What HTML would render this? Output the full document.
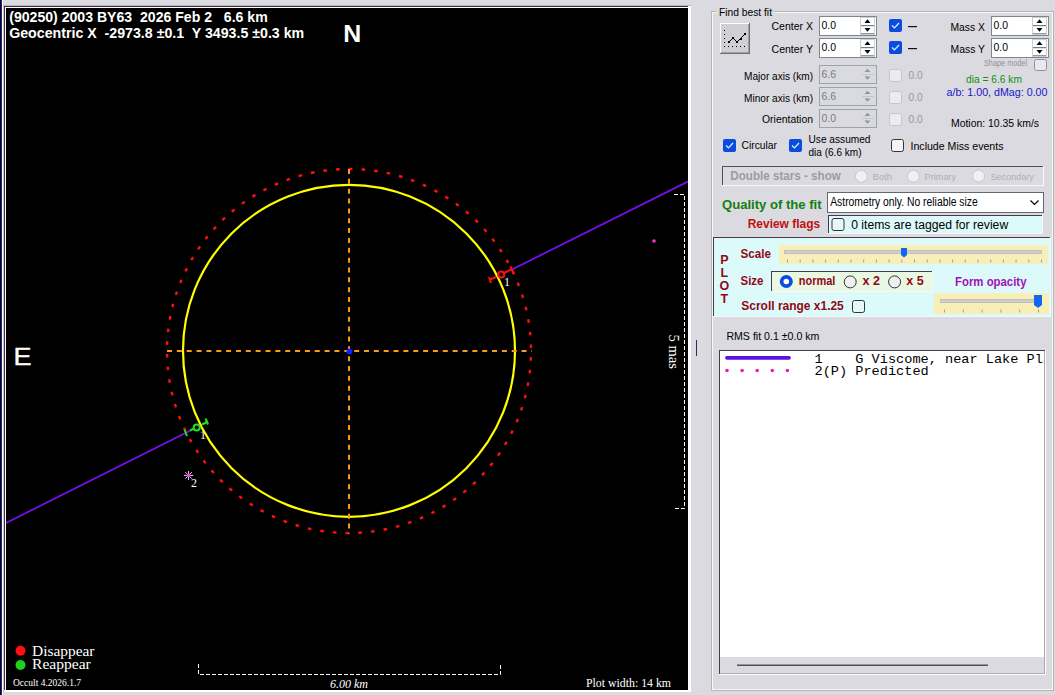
<!DOCTYPE html>
<html><head><meta charset="utf-8">
<style>
*{margin:0;padding:0;box-sizing:border-box}
html,body{width:1055px;height:695px;overflow:hidden}
body{position:relative;background:#dadae0;font-family:"Liberation Sans",sans-serif;font-size:11px;color:#000}
.a{position:absolute;white-space:nowrap}
.t{position:absolute;white-space:nowrap;line-height:1}

</style></head><body>
<div class="a" style="left:0;top:0;width:1px;height:695px;background:#00005a"></div>
<div class="a" style="left:1px;top:0;width:1px;height:695px;background:#302848"></div>
<div class="a" style="left:2px;top:0;width:1px;height:695px;background:#fff"></div>
<div class="a" style="left:3px;top:5px;width:688px;height:687px;background:#fff;border-left:1px solid #c0d4c0;border-top:1px solid #b0c0b0"></div>
<div class="a" style="left:4px;top:6px;width:684px;height:684px;border-left:1px solid #461e50;border-top:1px solid #461e50"></div>
<div class="a" style="left:696px;top:340px;width:1px;height:16px;background:#2a3050"></div>
<div class="a" style="left:6px;top:8px;width:682px;height:682px;background:#000"></div>
<svg class="a" style="left:0;top:0;white-space:pre" width="1055" height="695" viewBox="0 0 1055 695">
<defs><clipPath id="pc"><rect x="6" y="8" width="682" height="682"/></clipPath></defs>
<g clip-path="url(#pc)">
<g fill="#ff1010">
<rect x="-1.8" y="-1.2" width="3.6" height="2.4" transform="translate(350.59 169.01) rotate(0.5)"/>
<rect x="-1.8" y="-1.2" width="3.6" height="2.4" transform="translate(363.28 169.56) rotate(4.5)"/>
<rect x="-1.8" y="-1.2" width="3.6" height="2.4" transform="translate(375.90 171.00) rotate(8.5)"/>
<rect x="-1.8" y="-1.2" width="3.6" height="2.4" transform="translate(388.39 173.31) rotate(12.5)"/>
<rect x="-1.8" y="-1.2" width="3.6" height="2.4" transform="translate(400.69 176.49) rotate(16.5)"/>
<rect x="-1.8" y="-1.2" width="3.6" height="2.4" transform="translate(412.74 180.53) rotate(20.5)"/>
<rect x="-1.8" y="-1.2" width="3.6" height="2.4" transform="translate(424.47 185.39) rotate(24.5)"/>
<rect x="-1.8" y="-1.2" width="3.6" height="2.4" transform="translate(435.84 191.06) rotate(28.5)"/>
<rect x="-1.8" y="-1.2" width="3.6" height="2.4" transform="translate(446.79 197.50) rotate(32.5)"/>
<rect x="-1.8" y="-1.2" width="3.6" height="2.4" transform="translate(457.26 204.70) rotate(36.5)"/>
<rect x="-1.8" y="-1.2" width="3.6" height="2.4" transform="translate(467.20 212.61) rotate(40.5)"/>
<rect x="-1.8" y="-1.2" width="3.6" height="2.4" transform="translate(476.57 221.19) rotate(44.5)"/>
<rect x="-1.8" y="-1.2" width="3.6" height="2.4" transform="translate(485.31 230.40) rotate(48.5)"/>
<rect x="-1.8" y="-1.2" width="3.6" height="2.4" transform="translate(493.39 240.21) rotate(52.5)"/>
<rect x="-1.8" y="-1.2" width="3.6" height="2.4" transform="translate(500.77 250.55) rotate(56.5)"/>
<rect x="-1.8" y="-1.2" width="3.6" height="2.4" transform="translate(507.40 261.38) rotate(60.5)"/>
<rect x="-1.8" y="-1.2" width="3.6" height="2.4" transform="translate(513.27 272.65) rotate(64.5)"/>
<rect x="-1.8" y="-1.2" width="3.6" height="2.4" transform="translate(518.34 284.30) rotate(68.5)"/>
<rect x="-1.8" y="-1.2" width="3.6" height="2.4" transform="translate(522.58 296.27) rotate(72.5)"/>
<rect x="-1.8" y="-1.2" width="3.6" height="2.4" transform="translate(525.97 308.51) rotate(76.5)"/>
<rect x="-1.8" y="-1.2" width="3.6" height="2.4" transform="translate(528.50 320.96) rotate(80.5)"/>
<rect x="-1.8" y="-1.2" width="3.6" height="2.4" transform="translate(530.16 333.56) rotate(84.5)"/>
<rect x="-1.8" y="-1.2" width="3.6" height="2.4" transform="translate(530.94 346.24) rotate(88.5)"/>
<rect x="-1.8" y="-1.2" width="3.6" height="2.4" transform="translate(530.83 358.94) rotate(92.5)"/>
<rect x="-1.8" y="-1.2" width="3.6" height="2.4" transform="translate(529.83 371.60) rotate(96.5)"/>
<rect x="-1.8" y="-1.2" width="3.6" height="2.4" transform="translate(527.95 384.17) rotate(100.5)"/>
<rect x="-1.8" y="-1.2" width="3.6" height="2.4" transform="translate(525.20 396.57) rotate(104.5)"/>
<rect x="-1.8" y="-1.2" width="3.6" height="2.4" transform="translate(521.59 408.75) rotate(108.5)"/>
<rect x="-1.8" y="-1.2" width="3.6" height="2.4" transform="translate(517.15 420.65) rotate(112.5)"/>
<rect x="-1.8" y="-1.2" width="3.6" height="2.4" transform="translate(511.88 432.21) rotate(116.5)"/>
<rect x="-1.8" y="-1.2" width="3.6" height="2.4" transform="translate(505.82 443.37) rotate(120.5)"/>
<rect x="-1.8" y="-1.2" width="3.6" height="2.4" transform="translate(498.99 454.09) rotate(124.5)"/>
<rect x="-1.8" y="-1.2" width="3.6" height="2.4" transform="translate(491.43 464.30) rotate(128.5)"/>
<rect x="-1.8" y="-1.2" width="3.6" height="2.4" transform="translate(483.18 473.96) rotate(132.5)"/>
<rect x="-1.8" y="-1.2" width="3.6" height="2.4" transform="translate(474.28 483.02) rotate(136.5)"/>
<rect x="-1.8" y="-1.2" width="3.6" height="2.4" transform="translate(464.77 491.44) rotate(140.5)"/>
<rect x="-1.8" y="-1.2" width="3.6" height="2.4" transform="translate(454.69 499.17) rotate(144.5)"/>
<rect x="-1.8" y="-1.2" width="3.6" height="2.4" transform="translate(444.09 506.18) rotate(148.5)"/>
<rect x="-1.8" y="-1.2" width="3.6" height="2.4" transform="translate(433.04 512.44) rotate(152.5)"/>
<rect x="-1.8" y="-1.2" width="3.6" height="2.4" transform="translate(421.57 517.90) rotate(156.5)"/>
<rect x="-1.8" y="-1.2" width="3.6" height="2.4" transform="translate(409.75 522.56) rotate(160.5)"/>
<rect x="-1.8" y="-1.2" width="3.6" height="2.4" transform="translate(397.64 526.38) rotate(164.5)"/>
<rect x="-1.8" y="-1.2" width="3.6" height="2.4" transform="translate(385.28 529.35) rotate(168.5)"/>
<rect x="-1.8" y="-1.2" width="3.6" height="2.4" transform="translate(372.76 531.44) rotate(172.5)"/>
<rect x="-1.8" y="-1.2" width="3.6" height="2.4" transform="translate(360.11 532.66) rotate(176.5)"/>
<rect x="-1.8" y="-1.2" width="3.6" height="2.4" transform="translate(347.41 532.99) rotate(180.5)"/>
<rect x="-1.8" y="-1.2" width="3.6" height="2.4" transform="translate(334.72 532.44) rotate(184.5)"/>
<rect x="-1.8" y="-1.2" width="3.6" height="2.4" transform="translate(322.10 531.00) rotate(188.5)"/>
<rect x="-1.8" y="-1.2" width="3.6" height="2.4" transform="translate(309.61 528.69) rotate(192.5)"/>
<rect x="-1.8" y="-1.2" width="3.6" height="2.4" transform="translate(297.31 525.51) rotate(196.5)"/>
<rect x="-1.8" y="-1.2" width="3.6" height="2.4" transform="translate(285.26 521.47) rotate(200.5)"/>
<rect x="-1.8" y="-1.2" width="3.6" height="2.4" transform="translate(273.53 516.61) rotate(204.5)"/>
<rect x="-1.8" y="-1.2" width="3.6" height="2.4" transform="translate(262.16 510.94) rotate(208.5)"/>
<rect x="-1.8" y="-1.2" width="3.6" height="2.4" transform="translate(251.21 504.50) rotate(212.5)"/>
<rect x="-1.8" y="-1.2" width="3.6" height="2.4" transform="translate(240.74 497.30) rotate(216.5)"/>
<rect x="-1.8" y="-1.2" width="3.6" height="2.4" transform="translate(230.80 489.39) rotate(220.5)"/>
<rect x="-1.8" y="-1.2" width="3.6" height="2.4" transform="translate(221.43 480.81) rotate(224.5)"/>
<rect x="-1.8" y="-1.2" width="3.6" height="2.4" transform="translate(212.69 471.60) rotate(228.5)"/>
<rect x="-1.8" y="-1.2" width="3.6" height="2.4" transform="translate(204.61 461.79) rotate(232.5)"/>
<rect x="-1.8" y="-1.2" width="3.6" height="2.4" transform="translate(197.23 451.45) rotate(236.5)"/>
<rect x="-1.8" y="-1.2" width="3.6" height="2.4" transform="translate(190.60 440.62) rotate(240.5)"/>
<rect x="-1.8" y="-1.2" width="3.6" height="2.4" transform="translate(184.73 429.35) rotate(244.5)"/>
<rect x="-1.8" y="-1.2" width="3.6" height="2.4" transform="translate(179.66 417.70) rotate(248.5)"/>
<rect x="-1.8" y="-1.2" width="3.6" height="2.4" transform="translate(175.42 405.73) rotate(252.5)"/>
<rect x="-1.8" y="-1.2" width="3.6" height="2.4" transform="translate(172.03 393.49) rotate(256.5)"/>
<rect x="-1.8" y="-1.2" width="3.6" height="2.4" transform="translate(169.50 381.04) rotate(260.5)"/>
<rect x="-1.8" y="-1.2" width="3.6" height="2.4" transform="translate(167.84 368.44) rotate(264.5)"/>
<rect x="-1.8" y="-1.2" width="3.6" height="2.4" transform="translate(167.06 355.76) rotate(268.5)"/>
<rect x="-1.8" y="-1.2" width="3.6" height="2.4" transform="translate(167.17 343.06) rotate(272.5)"/>
<rect x="-1.8" y="-1.2" width="3.6" height="2.4" transform="translate(168.17 330.40) rotate(276.5)"/>
<rect x="-1.8" y="-1.2" width="3.6" height="2.4" transform="translate(170.05 317.83) rotate(280.5)"/>
<rect x="-1.8" y="-1.2" width="3.6" height="2.4" transform="translate(172.80 305.43) rotate(284.5)"/>
<rect x="-1.8" y="-1.2" width="3.6" height="2.4" transform="translate(176.41 293.25) rotate(288.5)"/>
<rect x="-1.8" y="-1.2" width="3.6" height="2.4" transform="translate(180.85 281.35) rotate(292.5)"/>
<rect x="-1.8" y="-1.2" width="3.6" height="2.4" transform="translate(186.12 269.79) rotate(296.5)"/>
<rect x="-1.8" y="-1.2" width="3.6" height="2.4" transform="translate(192.18 258.63) rotate(300.5)"/>
<rect x="-1.8" y="-1.2" width="3.6" height="2.4" transform="translate(199.01 247.91) rotate(304.5)"/>
<rect x="-1.8" y="-1.2" width="3.6" height="2.4" transform="translate(206.57 237.70) rotate(308.5)"/>
<rect x="-1.8" y="-1.2" width="3.6" height="2.4" transform="translate(214.82 228.04) rotate(312.5)"/>
<rect x="-1.8" y="-1.2" width="3.6" height="2.4" transform="translate(223.72 218.98) rotate(316.5)"/>
<rect x="-1.8" y="-1.2" width="3.6" height="2.4" transform="translate(233.23 210.56) rotate(320.5)"/>
<rect x="-1.8" y="-1.2" width="3.6" height="2.4" transform="translate(243.31 202.83) rotate(324.5)"/>
<rect x="-1.8" y="-1.2" width="3.6" height="2.4" transform="translate(253.91 195.82) rotate(328.5)"/>
<rect x="-1.8" y="-1.2" width="3.6" height="2.4" transform="translate(264.96 189.56) rotate(332.5)"/>
<rect x="-1.8" y="-1.2" width="3.6" height="2.4" transform="translate(276.43 184.10) rotate(336.5)"/>
<rect x="-1.8" y="-1.2" width="3.6" height="2.4" transform="translate(288.25 179.44) rotate(340.5)"/>
<rect x="-1.8" y="-1.2" width="3.6" height="2.4" transform="translate(300.36 175.62) rotate(344.5)"/>
<rect x="-1.8" y="-1.2" width="3.6" height="2.4" transform="translate(312.72 172.65) rotate(348.5)"/>
<rect x="-1.8" y="-1.2" width="3.6" height="2.4" transform="translate(325.24 170.56) rotate(352.5)"/>
<rect x="-1.8" y="-1.2" width="3.6" height="2.4" transform="translate(337.89 169.34) rotate(356.5)"/>
</g>
<circle cx="349" cy="350.8" r="166" fill="none" stroke="#ffff00" stroke-width="2.2"/>
<line x1="349" y1="169" x2="349" y2="534" stroke="#ff9a18" stroke-width="2" stroke-dasharray="5 4.85"/>
<line x1="167" y1="351" x2="532" y2="351" stroke="#ff9a18" stroke-width="2" stroke-dasharray="5 4.85"/>
<circle cx="349.5" cy="351.5" r="3" fill="#1020ff"/>
<line x1="6" y1="523" x2="190" y2="430.7" stroke="#7810f0" stroke-width="1.7"/>
<line x1="512" y1="269.5" x2="690" y2="180.5" stroke="#7810f0" stroke-width="1.7"/>
<g stroke="#20e020" stroke-width="2" fill="none">
<line x1="190" y1="430.5" x2="194" y2="428.5"/>
<circle cx="196.7" cy="427.4" r="3"/>
<line x1="184.5" y1="429.5" x2="187" y2="436"/>
<line x1="202" y1="424.5" x2="208" y2="421.5"/>
<line x1="205.5" y1="418.5" x2="208" y2="424.5"/>
</g>
<g stroke="#ff1010" stroke-width="2" fill="none">
<circle cx="501.2" cy="274.6" r="3"/>
<line x1="504" y1="273" x2="512" y2="269"/>
<line x1="510.5" y1="266.5" x2="514" y2="274"/>
<line x1="490" y1="279.5" x2="496" y2="277"/>
<line x1="489" y1="277" x2="491" y2="283"/>
</g>
<g stroke="#f0d8f0" stroke-width="1">
<line x1="184" y1="475.4" x2="193.2" y2="475.4"/>
<line x1="188.6" y1="471" x2="188.6" y2="480"/>
<line x1="185.4" y1="472.2" x2="191.8" y2="478.6"/>
<line x1="185.4" y1="478.6" x2="191.8" y2="472.2"/>
</g>
<circle cx="188.6" cy="475.4" r="1.8" fill="#ff30ff"/>
<circle cx="654" cy="241" r="1.8" fill="#ff30c0"/>
<g stroke="#fff" stroke-width="1" fill="none">
<path d="M674 194.5 H684.5 V508.5 H674" stroke-dasharray="4 2"/>
<path d="M198.5 664 V674.5 H500.5 V664" stroke-dasharray="4 2"/>
</g>
<g fill="#fff" font-family="Liberation Sans" font-weight="bold" font-size="14">
<text x="9.2" y="21.8" xml:space="preserve" textLength="258.5" lengthAdjust="spacingAndGlyphs">(90250) 2003 BY63  2026 Feb 2   6.6 km</text>
<text x="9.2" y="37.8" xml:space="preserve" textLength="295" lengthAdjust="spacingAndGlyphs">Geocentric X  -2973.8 ±0.1  Y 3493.5 ±0.3 km</text>
</g>
<text x="343.2" y="42" fill="#fff" font-family="Liberation Sans" font-weight="bold" font-size="23.5" textLength="18" lengthAdjust="spacingAndGlyphs">N</text>
<text x="13.6" y="365" fill="#fff" stroke="#fff" stroke-width="0.4" font-family="Liberation Sans" font-size="24" textLength="18" lengthAdjust="spacingAndGlyphs">E</text>
<g fill="#fff" font-family="Liberation Serif" font-size="12">
<text x="200" y="438.7">1</text>
<text x="504" y="285.7">1</text>
<text x="191" y="486.8">2</text>
</g>
<text transform="translate(669 334.5) rotate(90)" fill="#fff" font-family="Liberation Serif" font-size="15" textLength="34.5" lengthAdjust="spacingAndGlyphs">5 mas</text>
<text x="330" y="687.6" fill="#fff" font-family="Liberation Serif" font-style="italic" font-size="13" textLength="38" lengthAdjust="spacingAndGlyphs">6.00 km</text>
<text x="586" y="687.4" fill="#fff" font-family="Liberation Serif" font-size="13" textLength="85" lengthAdjust="spacingAndGlyphs">Plot width: 14 km</text>
<circle cx="20.5" cy="650.7" r="5" fill="#ff1010"/>
<circle cx="20.5" cy="665" r="5" fill="#20d020"/>
<g fill="#fff" font-family="Liberation Serif" font-size="15">
<text x="32" y="655.6" textLength="62.5" lengthAdjust="spacingAndGlyphs">Disappear</text>
<text x="32" y="669.4" textLength="58.8" lengthAdjust="spacingAndGlyphs">Reappear</text>
</g>
<text x="13" y="685.5" fill="#fff" font-family="Liberation Serif" font-size="11" textLength="68" lengthAdjust="spacingAndGlyphs">Occult 4.2026.1.7</text>
</g>
</svg>
<svg class="a" style="left:0;top:0" width="1055" height="695" viewBox="0 0 1055 695"><rect x="711" y="11" width="343" height="1" fill="#b0b8b0"/><rect x="711" y="690" width="343" height="1" fill="#b0b8b0"/><rect x="711" y="11" width="1" height="680" fill="#b0b8b0"/><rect x="1053" y="11" width="1" height="680" fill="#b0b8b0"/>
<rect x="712" y="12" width="341" height="1" fill="#f8f8f8"/><rect x="712" y="689" width="341" height="1" fill="#f8f8f8"/><rect x="712" y="12" width="1" height="678" fill="#f8f8f8"/><rect x="1052" y="12" width="1" height="678" fill="#f8f8f8"/>
<rect x="716" y="4" width="58" height="12" fill="#dadae0"/>
<text x="719" y="16" font-family="Liberation Sans" font-size="11.5" font-weight="normal" fill="#000" text-anchor="start" textLength="53" lengthAdjust="spacingAndGlyphs" xml:space="preserve">Find best fit</text>
<rect x="720" y="23" width="30" height="31" fill="#cfcfd4"/>
<rect x="720" y="23" width="30" height="1" fill="#ffffff"/><rect x="720" y="23" width="1" height="31" fill="#ffffff"/><rect x="720" y="53" width="30" height="1" fill="#707070"/><rect x="749" y="23" width="1" height="31" fill="#707070"/>
<rect x="721" y="52" width="28" height="1" fill="#a0a0a0"/><rect x="748" y="24" width="1" height="29" fill="#a0a0a0"/>
<g fill="#000"><rect x="724" y="46" width="1" height="1"/><rect x="728" y="46" width="1" height="1"/><rect x="732" y="46" width="1" height="1"/><rect x="736" y="46" width="1" height="1"/><rect x="740" y="46" width="1" height="1"/><rect x="744" y="46" width="1" height="1"/><rect x="724" y="30" width="1" height="1"/><rect x="724" y="34" width="1" height="1"/><rect x="724" y="38" width="1" height="1"/><rect x="724" y="42" width="1" height="1"/></g>
<path d="M729 42 L733 38 L737 42 L745 34" stroke="#000" stroke-width="1" fill="none"/>
<g fill="#000"><rect x="728" y="41" width="2" height="2"/><rect x="732" y="37" width="2" height="2"/><rect x="736" y="41" width="2" height="2"/><rect x="740" y="38" width="2" height="2"/><rect x="744" y="33" width="2" height="2"/></g>
<text x="813" y="30.3" font-family="Liberation Sans" font-size="11.5" font-weight="normal" fill="#000" text-anchor="end" textLength="41.5" lengthAdjust="spacingAndGlyphs" xml:space="preserve">Center X</text>
<text x="813" y="52.5" font-family="Liberation Sans" font-size="11.5" font-weight="normal" fill="#000" text-anchor="end" textLength="41.5" lengthAdjust="spacingAndGlyphs" xml:space="preserve">Center Y</text>
<text x="813" y="79.8" font-family="Liberation Sans" font-size="11.5" font-weight="normal" fill="#000" text-anchor="end" textLength="69" lengthAdjust="spacingAndGlyphs" xml:space="preserve">Major axis (km)</text>
<text x="813" y="101.6" font-family="Liberation Sans" font-size="11.5" font-weight="normal" fill="#000" text-anchor="end" textLength="69" lengthAdjust="spacingAndGlyphs" xml:space="preserve">Minor axis (km)</text>
<text x="813" y="122.5" font-family="Liberation Sans" font-size="11.5" font-weight="normal" fill="#000" text-anchor="end" textLength="51" lengthAdjust="spacingAndGlyphs" xml:space="preserve">Orientation</text>
<rect x="819" y="16" width="58" height="20" fill="#ffffff"/><rect x="819" y="16" width="58" height="1" fill="#7c8890"/><rect x="819" y="35" width="58" height="1" fill="#7c8890"/><rect x="819" y="16" width="1" height="20" fill="#7c8890"/><rect x="876" y="16" width="1" height="20" fill="#7c8890"/><text x="821.5" y="29" font-family="Liberation Sans" font-size="11.5" font-weight="normal" fill="#000" text-anchor="start" textLength="14.5" lengthAdjust="spacingAndGlyphs" xml:space="preserve">0.0</text><rect x="860" y="17" width="15" height="1" fill="#c8d0c8"/><rect x="860" y="34" width="15" height="1" fill="#c8d0c8"/><rect x="860" y="17" width="1" height="18" fill="#c8d0c8"/><rect x="874" y="17" width="1" height="18" fill="#c8d0c8"/><rect x="861" y="25" width="13" height="1.2" fill="#7a7a90"/><rect x="861" y="33" width="13" height="1" fill="#9098b0"/><path d="M864.5 23 L867.5 19.2 L870.5 23 Z" fill="#000"/><path d="M864.5 28 L867.5 31.8 L870.5 28 Z" fill="#000"/>
<rect x="819" y="38" width="58" height="20" fill="#ffffff"/><rect x="819" y="38" width="58" height="1" fill="#7c8890"/><rect x="819" y="57" width="58" height="1" fill="#7c8890"/><rect x="819" y="38" width="1" height="20" fill="#7c8890"/><rect x="876" y="38" width="1" height="20" fill="#7c8890"/><text x="821.5" y="51" font-family="Liberation Sans" font-size="11.5" font-weight="normal" fill="#000" text-anchor="start" textLength="14.5" lengthAdjust="spacingAndGlyphs" xml:space="preserve">0.0</text><rect x="860" y="39" width="15" height="1" fill="#c8d0c8"/><rect x="860" y="56" width="15" height="1" fill="#c8d0c8"/><rect x="860" y="39" width="1" height="18" fill="#c8d0c8"/><rect x="874" y="39" width="1" height="18" fill="#c8d0c8"/><rect x="861" y="47" width="13" height="1.2" fill="#7a7a90"/><rect x="861" y="55" width="13" height="1" fill="#9098b0"/><path d="M864.5 45 L867.5 41.2 L870.5 45 Z" fill="#000"/><path d="M864.5 50 L867.5 53.8 L870.5 50 Z" fill="#000"/>
<rect x="819" y="65" width="58" height="1" fill="#98a4b0"/><rect x="819" y="83" width="58" height="1" fill="#98a4b0"/><rect x="819" y="65" width="1" height="19" fill="#98a4b0"/><rect x="876" y="65" width="1" height="19" fill="#98a4b0"/><text x="821.5" y="78" font-family="Liberation Sans" font-size="11.5" font-weight="normal" fill="#7c7c80" text-anchor="start" textLength="14.5" lengthAdjust="spacingAndGlyphs" xml:space="preserve">6.6</text><rect x="861" y="67" width="14" height="1" fill="#d4dad4"/><rect x="861" y="81" width="14" height="1" fill="#d4dad4"/><rect x="861" y="67" width="1" height="15" fill="#d4dad4"/><rect x="874" y="67" width="1" height="15" fill="#d4dad4"/><path d="M864.5 72 L867.5 68.8 L870.5 72 Z" fill="#909890"/><path d="M864.5 76.5 L867.5 79.7 L870.5 76.5 Z" fill="#909890"/><rect x="862" y="74" width="12" height="1" fill="#c4c8c4"/>
<rect x="819" y="87" width="58" height="1" fill="#98a4b0"/><rect x="819" y="105" width="58" height="1" fill="#98a4b0"/><rect x="819" y="87" width="1" height="19" fill="#98a4b0"/><rect x="876" y="87" width="1" height="19" fill="#98a4b0"/><text x="821.5" y="100" font-family="Liberation Sans" font-size="11.5" font-weight="normal" fill="#7c7c80" text-anchor="start" textLength="14.5" lengthAdjust="spacingAndGlyphs" xml:space="preserve">6.6</text><rect x="861" y="89" width="14" height="1" fill="#d4dad4"/><rect x="861" y="103" width="14" height="1" fill="#d4dad4"/><rect x="861" y="89" width="1" height="15" fill="#d4dad4"/><rect x="874" y="89" width="1" height="15" fill="#d4dad4"/><path d="M864.5 94 L867.5 90.8 L870.5 94 Z" fill="#909890"/><path d="M864.5 98.5 L867.5 101.7 L870.5 98.5 Z" fill="#909890"/><rect x="862" y="96" width="12" height="1" fill="#c4c8c4"/>
<rect x="819" y="109" width="58" height="1" fill="#98a4b0"/><rect x="819" y="127" width="58" height="1" fill="#98a4b0"/><rect x="819" y="109" width="1" height="19" fill="#98a4b0"/><rect x="876" y="109" width="1" height="19" fill="#98a4b0"/><text x="821.5" y="122" font-family="Liberation Sans" font-size="11.5" font-weight="normal" fill="#7c7c80" text-anchor="start" textLength="14.5" lengthAdjust="spacingAndGlyphs" xml:space="preserve">0.0</text><rect x="861" y="111" width="14" height="1" fill="#d4dad4"/><rect x="861" y="125" width="14" height="1" fill="#d4dad4"/><rect x="861" y="111" width="1" height="15" fill="#d4dad4"/><rect x="874" y="111" width="1" height="15" fill="#d4dad4"/><path d="M864.5 116 L867.5 112.8 L870.5 116 Z" fill="#909890"/><path d="M864.5 120.5 L867.5 123.7 L870.5 120.5 Z" fill="#909890"/><rect x="862" y="118" width="12" height="1" fill="#c4c8c4"/>
<rect x="889" y="19" width="13" height="13" rx="2" fill="#0a4ce0"/><path d="M892 25.5 L894.5 28 L899 23" stroke="#d8f4ff" stroke-width="1.2" fill="none"/>
<rect x="889" y="41" width="13" height="13" rx="2" fill="#0a4ce0"/><path d="M892 47.5 L894.5 50 L899 45" stroke="#d8f4ff" stroke-width="1.2" fill="none"/>
<rect x="889.5" y="69.5" width="12" height="12" rx="2" fill="#ececf0" stroke="#c8c4cc" stroke-width="1"/>
<rect x="889.5" y="91.5" width="12" height="12" rx="2" fill="#ececf0" stroke="#c8c4cc" stroke-width="1"/>
<rect x="889.5" y="113.5" width="12" height="12" rx="2" fill="#ececf0" stroke="#c8c4cc" stroke-width="1"/>
<rect x="908" y="26" width="9" height="1.2" fill="#101018"/><rect x="908" y="48" width="9" height="1.2" fill="#101018"/>
<text x="908.5" y="79" font-family="Liberation Sans" font-size="11.5" font-weight="normal" fill="#989898" text-anchor="start" textLength="14.2" lengthAdjust="spacingAndGlyphs" xml:space="preserve">0.0</text>
<text x="908.5" y="100.8" font-family="Liberation Sans" font-size="11.5" font-weight="normal" fill="#989898" text-anchor="start" textLength="14.2" lengthAdjust="spacingAndGlyphs" xml:space="preserve">0.0</text>
<text x="908.5" y="122.5" font-family="Liberation Sans" font-size="11.5" font-weight="normal" fill="#989898" text-anchor="start" textLength="14.2" lengthAdjust="spacingAndGlyphs" xml:space="preserve">0.0</text>
<text x="985" y="30.7" font-family="Liberation Sans" font-size="11.5" font-weight="normal" fill="#000" text-anchor="end" textLength="34.5" lengthAdjust="spacingAndGlyphs" xml:space="preserve">Mass X</text>
<text x="985" y="52.7" font-family="Liberation Sans" font-size="11.5" font-weight="normal" fill="#000" text-anchor="end" textLength="34.5" lengthAdjust="spacingAndGlyphs" xml:space="preserve">Mass Y</text>
<rect x="991" y="16" width="58" height="20" fill="#ffffff"/><rect x="991" y="16" width="58" height="1" fill="#7c8890"/><rect x="991" y="35" width="58" height="1" fill="#7c8890"/><rect x="991" y="16" width="1" height="20" fill="#7c8890"/><rect x="1048" y="16" width="1" height="20" fill="#7c8890"/><text x="993.5" y="29" font-family="Liberation Sans" font-size="11.5" font-weight="normal" fill="#000" text-anchor="start" textLength="14.5" lengthAdjust="spacingAndGlyphs" xml:space="preserve">0.0</text><rect x="1032" y="17" width="15" height="1" fill="#c8d0c8"/><rect x="1032" y="34" width="15" height="1" fill="#c8d0c8"/><rect x="1032" y="17" width="1" height="18" fill="#c8d0c8"/><rect x="1046" y="17" width="1" height="18" fill="#c8d0c8"/><rect x="1033" y="25" width="13" height="1.2" fill="#7a7a90"/><rect x="1033" y="33" width="13" height="1" fill="#9098b0"/><path d="M1036.5 23 L1039.5 19.2 L1042.5 23 Z" fill="#000"/><path d="M1036.5 28 L1039.5 31.8 L1042.5 28 Z" fill="#000"/>
<rect x="991" y="38" width="58" height="20" fill="#ffffff"/><rect x="991" y="38" width="58" height="1" fill="#7c8890"/><rect x="991" y="57" width="58" height="1" fill="#7c8890"/><rect x="991" y="38" width="1" height="20" fill="#7c8890"/><rect x="1048" y="38" width="1" height="20" fill="#7c8890"/><text x="993.5" y="51" font-family="Liberation Sans" font-size="11.5" font-weight="normal" fill="#000" text-anchor="start" textLength="14.5" lengthAdjust="spacingAndGlyphs" xml:space="preserve">0.0</text><rect x="1032" y="39" width="15" height="1" fill="#c8d0c8"/><rect x="1032" y="56" width="15" height="1" fill="#c8d0c8"/><rect x="1032" y="39" width="1" height="18" fill="#c8d0c8"/><rect x="1046" y="39" width="1" height="18" fill="#c8d0c8"/><rect x="1033" y="47" width="13" height="1.2" fill="#7a7a90"/><rect x="1033" y="55" width="13" height="1" fill="#9098b0"/><path d="M1036.5 45 L1039.5 41.2 L1042.5 45 Z" fill="#000"/><path d="M1036.5 50 L1039.5 53.8 L1042.5 50 Z" fill="#000"/>
<text x="984" y="66" font-family="Liberation Sans" font-size="8.5" font-weight="normal" fill="#909090" text-anchor="start" textLength="43" lengthAdjust="spacingAndGlyphs" xml:space="preserve">Shape model</text>
<rect x="1034.5" y="59.5" width="12" height="11" rx="2" fill="#e8e8f0" stroke="#9c8ca8" stroke-width="1"/>
<text x="966" y="82.6" font-family="Liberation Sans" font-size="11" font-weight="normal" fill="#109010" text-anchor="start" textLength="56" lengthAdjust="spacingAndGlyphs" xml:space="preserve">dia = 6.6 km</text>
<text x="946.5" y="96.3" font-family="Liberation Sans" font-size="11.5" font-weight="normal" fill="#1818c8" text-anchor="start" textLength="101" lengthAdjust="spacingAndGlyphs" xml:space="preserve">a/b: 1.00, dMag: 0.00</text>
<text x="951" y="126.8" font-family="Liberation Sans" font-size="11.5" font-weight="normal" fill="#000" text-anchor="start" textLength="88" lengthAdjust="spacingAndGlyphs" xml:space="preserve">Motion: 10.35 km/s</text>
<rect x="723" y="139" width="13" height="13" rx="2" fill="#0a4ce0"/><path d="M726 145.5 L728.5 148 L733 143" stroke="#d8f4ff" stroke-width="1.2" fill="none"/>
<text x="741.5" y="149.2" font-family="Liberation Sans" font-size="11.5" font-weight="normal" fill="#000" text-anchor="start" textLength="35.5" lengthAdjust="spacingAndGlyphs" xml:space="preserve">Circular</text>
<rect x="789" y="139" width="13" height="13" rx="2" fill="#0a4ce0"/><path d="M792 145.5 L794.5 148 L799 143" stroke="#d8f4ff" stroke-width="1.2" fill="none"/>
<text x="808.5" y="142.7" font-family="Liberation Sans" font-size="11.5" font-weight="normal" fill="#000" text-anchor="start" textLength="62" lengthAdjust="spacingAndGlyphs" xml:space="preserve">Use assumed</text>
<text x="808.5" y="155.6" font-family="Liberation Sans" font-size="11.5" font-weight="normal" fill="#000" text-anchor="start" textLength="53" lengthAdjust="spacingAndGlyphs" xml:space="preserve">dia (6.6 km)</text>
<rect x="891.5" y="139.5" width="12" height="12" rx="2" fill="#f4f4f4" stroke="#333333" stroke-width="1"/>
<text x="910.5" y="149.8" font-family="Liberation Sans" font-size="11.5" font-weight="normal" fill="#000" text-anchor="start" textLength="93" lengthAdjust="spacingAndGlyphs" xml:space="preserve">Include Miss events</text>
<rect x="722" y="166" width="322" height="1" fill="#5a4a5a"/><rect x="722" y="166" width="1" height="20" fill="#5a4a5a"/><rect x="722" y="185" width="322" height="1" fill="#f8f8f8"/><rect x="1043" y="166" width="1" height="20" fill="#f8f8f8"/>
<text x="730.3" y="179.8" font-family="Liberation Sans" font-size="12" font-weight="bold" fill="#9c9ca0" text-anchor="start" textLength="110.5" lengthAdjust="spacingAndGlyphs" xml:space="preserve">Double stars - show</text>
<circle cx="861.4" cy="176.3" r="6" fill="#f0f0f0" stroke="#c8c8c8" stroke-width="1"/>
<text x="872.6" y="180" font-family="Liberation Sans" font-size="9.5" font-weight="normal" fill="#b0b0b0" text-anchor="start" textLength="19.5" lengthAdjust="spacingAndGlyphs" xml:space="preserve">Both</text>
<circle cx="913.4" cy="176.3" r="6" fill="#f0f0f0" stroke="#c8c8c8" stroke-width="1"/>
<text x="924.6" y="180" font-family="Liberation Sans" font-size="9.5" font-weight="normal" fill="#b0b0b0" text-anchor="start" textLength="31.5" lengthAdjust="spacingAndGlyphs" xml:space="preserve">Primary</text>
<circle cx="978.6" cy="176" r="6" fill="#f0f0f0" stroke="#c8c8c8" stroke-width="1"/>
<text x="990.8" y="180" font-family="Liberation Sans" font-size="9.5" font-weight="normal" fill="#b0b0b0" text-anchor="start" textLength="43" lengthAdjust="spacingAndGlyphs" xml:space="preserve">Secondary</text>
<text x="722" y="208.5" font-family="Liberation Sans" font-size="12.5" font-weight="bold" fill="#108010" text-anchor="start" textLength="99.5" lengthAdjust="spacingAndGlyphs" xml:space="preserve">Quality of the fit</text>
<rect x="827" y="192" width="217" height="21" fill="#ffffff"/>
<rect x="827" y="192" width="217" height="1" fill="#606870"/><rect x="827" y="212" width="217" height="1" fill="#606870"/><rect x="827" y="192" width="1" height="21" fill="#606870"/><rect x="1043" y="192" width="1" height="21" fill="#606870"/>
<text x="830.2" y="205.7" font-family="Liberation Sans" font-size="12" font-weight="normal" fill="#000" text-anchor="start" textLength="147.5" lengthAdjust="spacingAndGlyphs" xml:space="preserve">Astrometry only. No reliable size</text>
<path d="M1030.5 200.5 L1034.5 204.5 L1038.5 200.5" stroke="#000" stroke-width="1.2" fill="none"/>
<text x="820.2" y="228.4" font-family="Liberation Sans" font-size="12.5" font-weight="bold" fill="#c01010" text-anchor="end" textLength="72.5" lengthAdjust="spacingAndGlyphs" xml:space="preserve">Review flags</text>
<rect x="828" y="215" width="215" height="19" fill="#dcfafa"/>
<rect x="828" y="215" width="215" height="1" fill="#4a3a4a"/><rect x="828" y="215" width="1" height="19" fill="#4a3a4a"/><rect x="828" y="233" width="215" height="1" fill="#f8f8f8"/><rect x="1042" y="215" width="1" height="19" fill="#f8f8f8"/>
<rect x="832.0" y="218.5" width="12" height="12" rx="2" fill="#e8f8f8" stroke="#333333" stroke-width="1"/>
<text x="851.2" y="228.8" font-family="Liberation Sans" font-size="12.5" font-weight="normal" fill="#000" text-anchor="start" textLength="157" lengthAdjust="spacingAndGlyphs" xml:space="preserve">0 items are tagged for review</text>
<rect x="713" y="237" width="338" height="80" fill="#dcfafa"/>
<rect x="713" y="237" width="338" height="1" fill="#4a3a4a"/><rect x="713" y="237" width="1" height="80" fill="#4a3a4a"/><rect x="713" y="316" width="338" height="1" fill="#f8f8f8"/><rect x="1050" y="237" width="1" height="80" fill="#f8f8f8"/>
<text x="724.3" y="263.5" font-family="Liberation Sans" font-size="12.5" font-weight="bold" fill="#900818" text-anchor="middle" xml:space="preserve">P</text>
<text x="724.3" y="276.7" font-family="Liberation Sans" font-size="12.5" font-weight="bold" fill="#900818" text-anchor="middle" xml:space="preserve">L</text>
<text x="724.3" y="289.9" font-family="Liberation Sans" font-size="12.5" font-weight="bold" fill="#900818" text-anchor="middle" xml:space="preserve">O</text>
<text x="724.3" y="303.1" font-family="Liberation Sans" font-size="12.5" font-weight="bold" fill="#900818" text-anchor="middle" xml:space="preserve">T</text>
<text x="740.5" y="258.4" font-family="Liberation Sans" font-size="12.5" font-weight="bold" fill="#900818" text-anchor="start" textLength="30.5" lengthAdjust="spacingAndGlyphs" xml:space="preserve">Scale</text>
<rect x="779" y="245" width="269" height="19" fill="#f8eeb8"/>
<rect x="784" y="250" width="258" height="4" fill="#d0d0c8"/>
<rect x="784" y="250" width="258" height="1" fill="#c0c0c0"/><rect x="784" y="253" width="258" height="1" fill="#c0c0c0"/><rect x="784" y="250" width="1" height="4" fill="#c0c0c0"/><rect x="1041" y="250" width="1" height="4" fill="#c0c0c0"/>
<g fill="#b090c0"><rect x="787.0" y="259.5" width="1" height="3"/><rect x="799.7" y="259.5" width="1" height="3"/><rect x="812.4" y="259.5" width="1" height="3"/><rect x="825.1" y="259.5" width="1" height="3"/><rect x="837.8" y="259.5" width="1" height="3"/><rect x="850.5" y="259.5" width="1" height="3"/><rect x="863.2" y="259.5" width="1" height="3"/><rect x="875.9" y="259.5" width="1" height="3"/><rect x="888.6" y="259.5" width="1" height="3"/><rect x="901.3" y="259.5" width="1" height="3"/><rect x="914.0" y="259.5" width="1" height="3"/><rect x="926.7" y="259.5" width="1" height="3"/><rect x="939.4" y="259.5" width="1" height="3"/><rect x="952.1" y="259.5" width="1" height="3"/><rect x="964.8" y="259.5" width="1" height="3"/><rect x="977.5" y="259.5" width="1" height="3"/><rect x="990.2" y="259.5" width="1" height="3"/><rect x="1002.9" y="259.5" width="1" height="3"/><rect x="1015.6" y="259.5" width="1" height="3"/><rect x="1028.3" y="259.5" width="1" height="3"/><rect x="1041.0" y="259.5" width="1" height="3"/></g>
<path d="M901 248 H907 V255 L904 257.5 L901 255 Z" fill="#1068f0"/>
<text x="740.5" y="284.7" font-family="Liberation Sans" font-size="12.5" font-weight="bold" fill="#900818" text-anchor="start" textLength="23" lengthAdjust="spacingAndGlyphs" xml:space="preserve">Size</text>
<rect x="771" y="271" width="162" height="21" fill="#e8f8e2"/>
<rect x="771" y="271" width="162" height="1" fill="#4a3a4a"/><rect x="771" y="271" width="1" height="21" fill="#4a3a4a"/><rect x="771" y="291" width="162" height="1" fill="#f8f8f8"/><rect x="932" y="271" width="1" height="21" fill="#f8f8f8"/>
<circle cx="786.3" cy="281.5" r="6.5" fill="#0a4ce0"/><circle cx="786.3" cy="281.5" r="2.8" fill="#fff"/>
<text x="798.8" y="284.7" font-family="Liberation Sans" font-size="12.5" font-weight="bold" fill="#900818" text-anchor="start" textLength="36.5" lengthAdjust="spacingAndGlyphs" xml:space="preserve">normal</text>
<circle cx="850.2" cy="281.9" r="6" fill="#f0f0f0" stroke="#333" stroke-width="1"/>
<text x="862.4" y="285" font-family="Liberation Sans" font-size="12.5" font-weight="bold" fill="#900818" text-anchor="start" textLength="17.5" lengthAdjust="spacingAndGlyphs" xml:space="preserve">x 2</text>
<circle cx="894.6" cy="281.9" r="6" fill="#f0f0f0" stroke="#333" stroke-width="1"/>
<text x="906.2" y="285" font-family="Liberation Sans" font-size="12.5" font-weight="bold" fill="#900818" text-anchor="start" textLength="17.5" lengthAdjust="spacingAndGlyphs" xml:space="preserve">x 5</text>
<text x="955" y="286" font-family="Liberation Sans" font-size="12.5" font-weight="bold" fill="#a010b8" text-anchor="start" textLength="71.5" lengthAdjust="spacingAndGlyphs" xml:space="preserve">Form opacity</text>
<text x="741.3" y="310.3" font-family="Liberation Sans" font-size="12.5" font-weight="bold" fill="#900818" text-anchor="start" textLength="102.5" lengthAdjust="spacingAndGlyphs" xml:space="preserve">Scroll range x1.25</text>
<rect x="852.5" y="300.5" width="12" height="12" rx="2" fill="#e8f8f8" stroke="#333333" stroke-width="1"/>
<rect x="934" y="293" width="115" height="21" fill="#f8eeb8"/>
<rect x="940" y="299" width="102" height="4" fill="#d0d0c8"/>
<rect x="940" y="299" width="102" height="1" fill="#c0c0c0"/><rect x="940" y="302" width="102" height="1" fill="#c0c0c0"/><rect x="940" y="299" width="1" height="4" fill="#c0c0c0"/><rect x="1041" y="299" width="1" height="4" fill="#c0c0c0"/>
<g fill="#b090c0"><rect x="944.0" y="309.5" width="1" height="3"/><rect x="962.8" y="309.5" width="1" height="3"/><rect x="981.6" y="309.5" width="1" height="3"/><rect x="1000.4" y="309.5" width="1" height="3"/><rect x="1019.2" y="309.5" width="1" height="3"/><rect x="1038.0" y="309.5" width="1" height="3"/></g>
<path d="M1034 295 H1042 V305 L1038 308 L1034 305 Z" fill="#1068f0"/>
<text x="726.4" y="339.9" font-family="Liberation Sans" font-size="11.5" font-weight="normal" fill="#000" text-anchor="start" textLength="93" lengthAdjust="spacingAndGlyphs" xml:space="preserve">RMS fit 0.1 ±0.0 km</text>
<rect x="719" y="350" width="326" height="324" fill="#ffffff"/>
<rect x="719" y="350" width="326" height="1" fill="#4a3a4a"/><rect x="719" y="350" width="1" height="324" fill="#4a3a4a"/>
<rect x="720" y="657" width="324" height="16" fill="#dadae0"/>
<rect x="1044" y="351" width="1" height="323" fill="#a8aca8"/><rect x="720" y="673" width="325" height="1" fill="#a8aca8"/><rect x="1045" y="350" width="1" height="325" fill="#ffffff"/><rect x="719" y="674" width="327" height="1" fill="#ffffff"/>
<rect x="737" y="664.5" width="251" height="1.5" fill="#505050"/>
<line x1="727" y1="357.8" x2="789" y2="357.8" stroke="#6010e0" stroke-width="3.8" stroke-linecap="round"/>
<g fill="#f018b0"><circle cx="727.0" cy="370.5" r="1.8"/><circle cx="742.1" cy="370.5" r="1.8"/><circle cx="757.2" cy="370.5" r="1.8"/><circle cx="772.3" cy="370.5" r="1.8"/><circle cx="787.4" cy="370.5" r="1.8"/></g>
<svg x="720" y="351" width="324" height="306"><g font-family="Liberation Mono" font-size="13.6" fill="#000" xml:space="preserve"><text x="94.5" y="11.5">1&#160;&#160;&#160;&#160;G&#160;Viscome,&#160;near&#160;Lake&#160;Placid</text><text x="94.5" y="23.5">2(P)&#160;Predicted</text></g></svg></svg>
</body></html>
